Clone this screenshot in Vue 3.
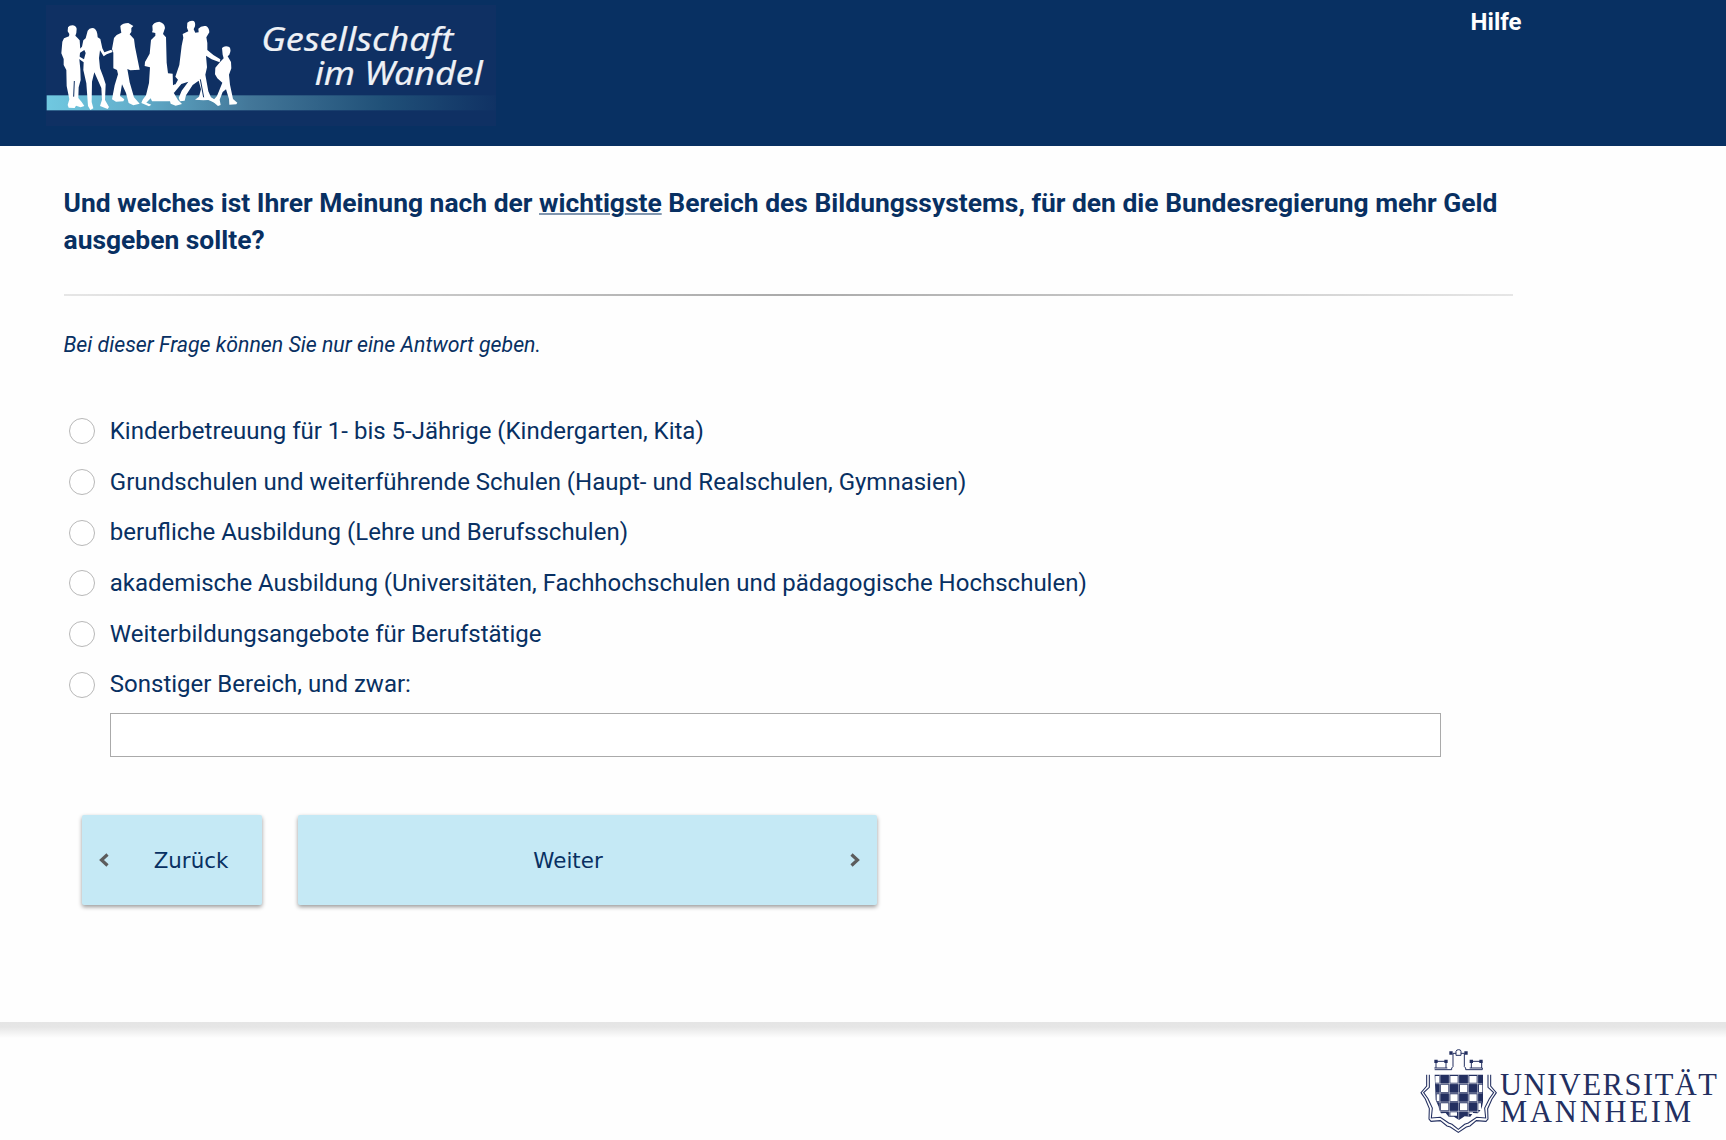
<script setup>
import { ref } from 'vue'

const options = [
  'Kinderbetreuung für 1- bis 5-Jährige (Kindergarten, Kita)',
  'Grundschulen und weiterführende Schulen (Haupt- und Realschulen, Gymnasien)',
  'berufliche Ausbildung (Lehre und Berufsschulen)',
  'akademische Ausbildung (Universitäten, Fachhochschulen und pädagogische Hochschulen)',
  'Weiterbildungsangebote für Berufstätige',
  'Sonstiger Bereich, und zwar:',
]
const selected = ref(null)
const other = ref('')
</script>

<template>
  <div class="page">
    <header class="header">
      <svg class="logo" viewBox="18 15 1350 363" role="img" aria-label="Gesellschaft im Wandel">
        <defs>
          <linearGradient id="strip" x1="0" x2="1" y1="0" y2="0">
            <stop offset="0" stop-color="#70c8e0" />
            <stop offset="0.2" stop-color="#62aecb" />
            <stop offset="0.45" stop-color="#437799" />
            <stop offset="0.75" stop-color="#205078" />
            <stop offset="1" stop-color="#103264" />
          </linearGradient>
        </defs>
        <rect x="18" y="15" width="1350" height="363" fill="#0f3063" />
        <rect x="20" y="286" width="1348" height="45" fill="url(#strip)" />
        <g fill="#fff">
          <path d="M84 82Q88 76 97 76Q108 77 110 86L109 99L106 107L112 113L119 121L121 150L118 178L121 208L122 240L116 262L115 294L125 306L133 318L122 322L108 317L104 324L86 323L83 315L88 298L80 258L79 210L71 195V177L64 160L67 125L72 115L87 109L88 102L83 94Z" />
          <path d="M137 115L143 92Q149 82 162 85Q172 90 173 112L181 117L187 145L193 157L214 149L218 156L200 163L191 169L180 151L177 174L180 205L190 231L197 253L195 300L207 321L203 327L180 318L186 299L184 264L163 217L156 245L155 306L160 325L151 330L144 318L139 250L130 210L131 187L113 174L115 168L132 178L137 159L133 150L118 160L113 153L126 140L130 121Z" />
          <path d="M241 78Q248 69 265 69L280 78L274 84V96L269 103L282 117L285 140L299 209L271 211L262 207L269 247L282 292L299 311L280 316L266 309L258 279L246 253L240 288L253 298L250 304L228 305L216 298L224 256L234 223L231 210L220 205V158L216 147L222 114L230 105L244 98L242 87Z" />
          <path d="M337 77Q341 66 358 65Q374 69 375 84L369 102L378 112L380 188L384 220L398 221L399 256L406 252L408 258L401 278L414 300L426 312L407 317L392 311L390 304H336L332 295L319 308L334 314L327 319L304 309L308 299L318 286L327 249L330 202L314 198L315 186L329 161L333 120L346 107V99L336 97L338 91Z" />
          <path d="M442 68Q450 61 461 63Q467 67 465 79L461 88L466 98L476 97L475 86Q483 76 498 78Q508 83 508 97L499 112L502 129V150L520 165L541 178L539 187L515 178L498 167L501 202L496 224L505 274L513 292L530 302L524 308L505 300L490 301L465 299L477 290L483 268L476 242L458 255L438 286L434 302L420 304L416 294L425 272L445 245L424 252L401 280L397 273L402 261L414 239L406 230L418 195L425 137L430 113L428 102L445 94L441 83Z" />
          <path d="M546 144Q554 136 568 141Q575 150 568 164L563 169L573 186L574 205L567 224L570 254L579 297L592 308L589 313L568 314L567 297L558 268L548 276L539 299L542 315L534 318L517 304L531 288L547 248L532 235L525 223L526 203L541 185L551 175L548 164Z" />
        </g>
        <path d="M103 243L101 290M481 238L491 292" fill="none" stroke="#0f3063" stroke-width="3" />
        <g class="logo-text">
          <text x="664" y="154" textLength="576" lengthAdjust="spacingAndGlyphs">Gesellschaft</text>
          <text x="824" y="255" textLength="504" lengthAdjust="spacingAndGlyphs">im Wandel</text>
        </g>
      </svg>
      <a class="help">Hilfe</a>
    </header>

    <main class="content">
      <h1 class="question">
        Und welches ist Ihrer Meinung nach der <span class="underlined">wichtigste</span> Bereich des Bildungssystems, für den die Bundesregierung mehr Geld ausgeben sollte?
      </h1>
      <div class="divider"></div>
      <p class="hint">Bei dieser Frage können Sie nur eine Antwort geben.</p>

      <div class="options">
        <label v-for="(option, i) in options" :key="i" class="option">
          <input v-model="selected" class="radio" type="radio" name="area" :value="i" />
          <span>{{ option }}</span>
        </label>
      </div>
      <input v-model="other" class="other" type="text" aria-label="Sonstiger Bereich" />

      <div class="buttons">
        <button class="button back" type="button">
          <svg class="chevron" viewBox="0 0 10 14"><path d="M8.5 1.5L2.5 7L8.5 12.5" /></svg>
          <span>Zurück</span>
        </button>
        <button class="button next" type="button">
          <span>Weiter</span>
          <svg class="chevron" viewBox="0 0 10 14"><path d="M1.5 1.5L7.5 7L1.5 12.5" /></svg>
        </button>
      </div>
    </main>

    <footer class="footer">
      <svg class="university" viewBox="0 0 316 100" role="img" aria-label="Universität Mannheim">
        <g transform="scale(0.33333)" fill="none" stroke="#232f60" stroke-width="3">
          <path d="M78 64H108M78 64V84M108 64V84M74 89H125V84L129 80V40H138M153 40H163V80L167 84V89H217V84M184 64H215M184 64V84M215 64V84M73 84H112M179 84H217" />
          <path d="M138 46V34Q139 29 146 29Q153 29 153 34V46Z" />
          <g fill="#232f60" stroke="none">
            <path d="M118 34h10v10h-10zM163 34h10v10h-10zM73 59h10v10h-10zM103 59h10v10h-10zM179 59h10v10h-10zM208 59h10v10h-10z" />
            <path d="M74 104H219V185Q216 210 203 220L189 219L181 230L164 229L147 240L132 230H116L107 219L93 220Q86 210 86 200L77 180Z" />
          </g>
          <g fill="#fff" stroke="none">
            <path d="M76 108h12v20h-12zM121 108h22v20h-22zM178 108h22v20h-22zM93 134h22v22h-22zM150 134h22v22h-22zM207 134h10v22h-10zM80 163h8v20h-8zM121 163h22v20h-22zM178 163h22v20h-22zM93 190h22v21h-22zM150 190h22v21h-22zM205 190h8v20h-8zM121 217h20v10h-20zM178 217h11v5h-11z" />
          </g>
          <path d="M76 131H217M78 159H217M82 186H215M90 214H207M90 104V215M118 104V229M146 104V239M175 104V229M203 104V218" stroke="#fff" stroke-width="1.5" />
          <path d="M50 104V138L33 158L46 177L58 206L57 237L63 244L91 242L111 258L121 261L145 277L169 261L180 258L199 242L228 244L234 237L233 206L246 177L259 158L242 138V104" stroke-width="3.2" />
          <path d="M58 104V142L41 158L54 176L67 204L64 234L91 232L116 249L126 253L145 268L164 253L175 249L200 232L227 234L224 204L238 176L251 158L234 142V104" stroke-width="3.2" />
        </g>
        <g class="university-text">
          <text x="90" y="54.9" textLength="217" lengthAdjust="spacing">UNIVERSITÄT</text>
          <text x="90" y="82.3" textLength="191" lengthAdjust="spacing">MANNHEIM</text>
        </g>
      </svg>
    </footer>
  </div>
</template>

<style>
body {
  margin: 0;
  background: #fefefe;
}
</style>

<style scoped>
.page {
  display: flex;
  flex-direction: column;
  height: 1140px;
  overflow: hidden;
  color: #083062;
  font-family: Roboto, sans-serif;
}
.header {
  display: flex;
  flex: none;
  justify-content: space-between;
  align-items: flex-start;
  box-sizing: border-box;
  height: 146px;
  padding: 5px 204.5px 0 46px;
  background: #083062;
}
.logo {
  width: 450px;
  height: 121px;
}
.logo-text {
  fill: #eef1f6;
  stroke: #eef1f6;
  stroke-width: 0.6px;
  font-family: "Noto Sans", sans-serif;
  font-size: 96px;
  font-style: italic;
}
.help {
  color: #fff;
  font-size: 24px;
  font-weight: 700;
  line-height: 34px;
}
.content {
  display: flex;
  flex: none;
  flex-direction: column;
  box-sizing: border-box;
  width: 1576px;
  height: 876px;
  padding: 38px 62px 0 63.5px;
}
.question {
  width: 1450px;
  margin: 0;
  font-size: 26.41px;
  font-weight: 700;
  line-height: 37px;
}
.underlined {
  text-decoration: underline 2px #8297b0;
}
.divider {
  width: 1449px;
  height: 2px;
  margin: 36px 0 0;
  background: linear-gradient(90deg, #e6e6e6, #aaa 50%, #e6e6e6);
}
.hint {
  margin: 34px 0 0;
  font-size: 21.3px;
  font-style: italic;
  line-height: 30px;
}
.options {
  display: flex;
  flex-direction: column;
  margin: 45.9px 0 0 5.5px;
}
.option {
  display: flex;
  align-items: center;
  gap: 14.8px;
  height: 50.7px;
  font-size: 24px;
}
.option span {
  padding-bottom: 0.6px;
}
.radio {
  appearance: none;
  box-sizing: border-box;
  width: 26px;
  height: 26px;
  margin: 0;
  border: 1px solid #b8b8b8;
  border-radius: 50%;
  background: #fff;
}
.other {
  box-sizing: border-box;
  width: 1331px;
  height: 44px;
  margin: 2.5px 0 0 46.5px;
  border: 1px solid #aaa;
  background: #fff;
}
.buttons {
  display: flex;
  gap: 36px;
  margin: 58px 0 0 18.5px;
}
.button {
  display: flex;
  align-items: center;
  height: 90px;
  padding: 1px 17px 0;
  border: 0;
  border-radius: 2px;
  background: #c5e9f5;
  box-shadow: 0 2px 4px rgba(0, 0, 0, 0.4);
  color: #083062;
  font-family: "DejaVu Sans", sans-serif;
  font-size: 21.4px;
}
.button span {
  flex: 1;
  text-align: center;
}
.back {
  width: 180px;
}
.back span {
  padding-left: 28px;
}
.next {
  width: 579px;
}
.next span {
  padding-right: 29px;
}
.chevron {
  flex: none;
  width: 10px;
  height: 14px;
  fill: none;
  stroke: #5c5c5c;
  stroke-width: 3.2;
}
.footer {
  display: flex;
  flex: 1;
  justify-content: flex-end;
  align-items: flex-end;
  background: linear-gradient(#e5e5e5, #e6e6e6 5px, #fefefe 16px);
}
.university {
  width: 316px;
  height: 100px;
}
.university-text {
  fill: #232f60;
  font-family: "Liberation Serif", serif;
  font-size: 30.5px;
}
</style>
